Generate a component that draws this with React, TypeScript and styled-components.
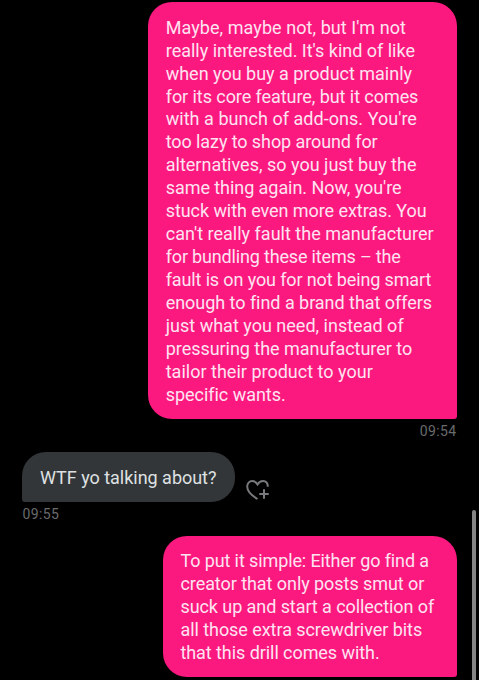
import React from 'react';
import styled, { createGlobalStyle } from 'styled-components';

const GlobalStyle = createGlobalStyle`
  body { margin: 0; background: #000; }
`;

type Side = 'sent' | 'received';

const Screen = styled.main`
  position: relative;
  display: flex;
  flex-direction: column;
  box-sizing: border-box;
  height: 680px;
  padding: 2.4px 22.4px 0;
  overflow: hidden;
  background: #000;
  font-family: Roboto, 'Liberation Sans', sans-serif;
`;

const Message = styled.article<{ $side: Side; $gap?: number }>`
  display: flex;
  flex-direction: column;
  align-items: ${(p) => (p.$side === 'sent' ? 'flex-end' : 'flex-start')};
  margin-bottom: ${(p) => p.$gap ?? 0}px;
`;

const BubbleRow = styled.div`
  display: flex;
  align-items: flex-end;
  gap: 10px;
`;

const Bubble = styled.div<{ $side: Side; $width: number }>`
  box-sizing: border-box;
  width: ${(p) => p.$width}px;
  padding: 14.4px 0 12.2px 17.6px;
  border-radius: ${(p) => (p.$side === 'sent' ? '24px 24px 3px 24px' : '24px 24px 24px 3px')};
  background: ${(p) => (p.$side === 'sent' ? '#fb187f' : '#333639')};
  color: ${(p) => (p.$side === 'sent' ? '#ffe3f1' : '#dfe1e2')};
  font-size: 18px;
  line-height: 22.92px;
  white-space: nowrap;
`;

const Line = styled.div<{ $tracking: number }>`
  letter-spacing: ${(p) => p.$tracking}px;
`;

const Time = styled.time`
  margin-top: 3px;
  color: #696b6d;
  font-size: 14px;
  line-height: 18px;
  letter-spacing: 0.4px;
`;

const ReactButton = styled.button`
  display: flex;
  padding: 0;
  border: 0;
  background: none;
  color: #77797c;
`;

const ScrollThumb = styled.div`
  position: absolute;
  top: 510px;
  right: 3.5px;
  bottom: -4px;
  width: 3.5px;
  border-radius: 2px;
  background: #858585;
`;

type TextLine = [text: string, tracking: number];

const first: TextLine[] = [
  ["Maybe, maybe not, but I'm not", 0.07],
  ["really interested. It's kind of like", -0.01],
  ['when you buy a product mainly', -0.01],
  ['for its core feature, but it comes', -0.065],
  ["with a bunch of add-ons. You're", 0.04],
  ['too lazy to shop around for', -0.09],
  ['alternatives, so you just buy the', 0.01],
  ["same thing again. Now, you're", -0.06],
  ['stuck with even more extras. You', -0.07],
  ["can't really fault the manufacturer", 0.01],
  ['for bundling these items – the', -0.17],
  ['fault is on you for not being smart', -0.13],
  ['enough to find a brand that offers', -0.04],
  ['just what you need, instead of', 0.01],
  ['pressuring the manufacturer to', -0.04],
  ['tailor their product to your', 0.01],
  ['specific wants.', -0.03],
];

const reply: TextLine[] = [['WTF yo talking about?', -0.02]];

const second: TextLine[] = [
  ['To put it simple: Either go find a', -0.11],
  ['creator that only posts smut or', -0.06],
  ['suck up and start a collection of', -0.07],
  ['all those extra screwdriver bits', -0.055],
  ['that this drill comes with.', -0.065],
];

function BubbleText({ lines }: { lines: TextLine[] }) {
  return (
    <>
      {lines.map(([text, tracking]) => (
        <Line key={text} $tracking={tracking}>{text}</Line>
      ))}
    </>
  );
}

function HeartPlus() {
  return (
    <svg width="26" height="24" viewBox="0 0 26 24" fill="none" stroke="currentColor" strokeWidth="2">
      <path d="M12.5 21C6.5 17.5 2.2 13 2.2 8.6C2.2 5.4 4.4 3 7.1 3C9.4 3 11.2 4.2 12.5 6.4C13.8 4.2 15.7 3 18 3C20.8 3 22.8 5.2 22.8 8.8" />
      <path d="M19 11.3V20.7M14.3 16H23.7" />
    </svg>
  );
}

export default function App() {
  return (
    <>
      <GlobalStyle />
      <Screen>
        <Message $side="sent" $gap={12.8}>
          <Bubble $side="sent" $width={308.5}><BubbleText lines={first} /></Bubble>
          <Time>09:54</Time>
        </Message>
        <Message $side="received" $gap={13}>
          <BubbleRow>
            <Bubble $side="received" $width={212.7}><BubbleText lines={reply} /></Bubble>
            <ReactButton aria-label="Add reaction"><HeartPlus /></ReactButton>
          </BubbleRow>
          <Time>09:55</Time>
        </Message>
        <Message $side="sent">
          <Bubble $side="sent" $width={293.8}><BubbleText lines={second} /></Bubble>
        </Message>
        <ScrollThumb />
      </Screen>
    </>
  );
}
